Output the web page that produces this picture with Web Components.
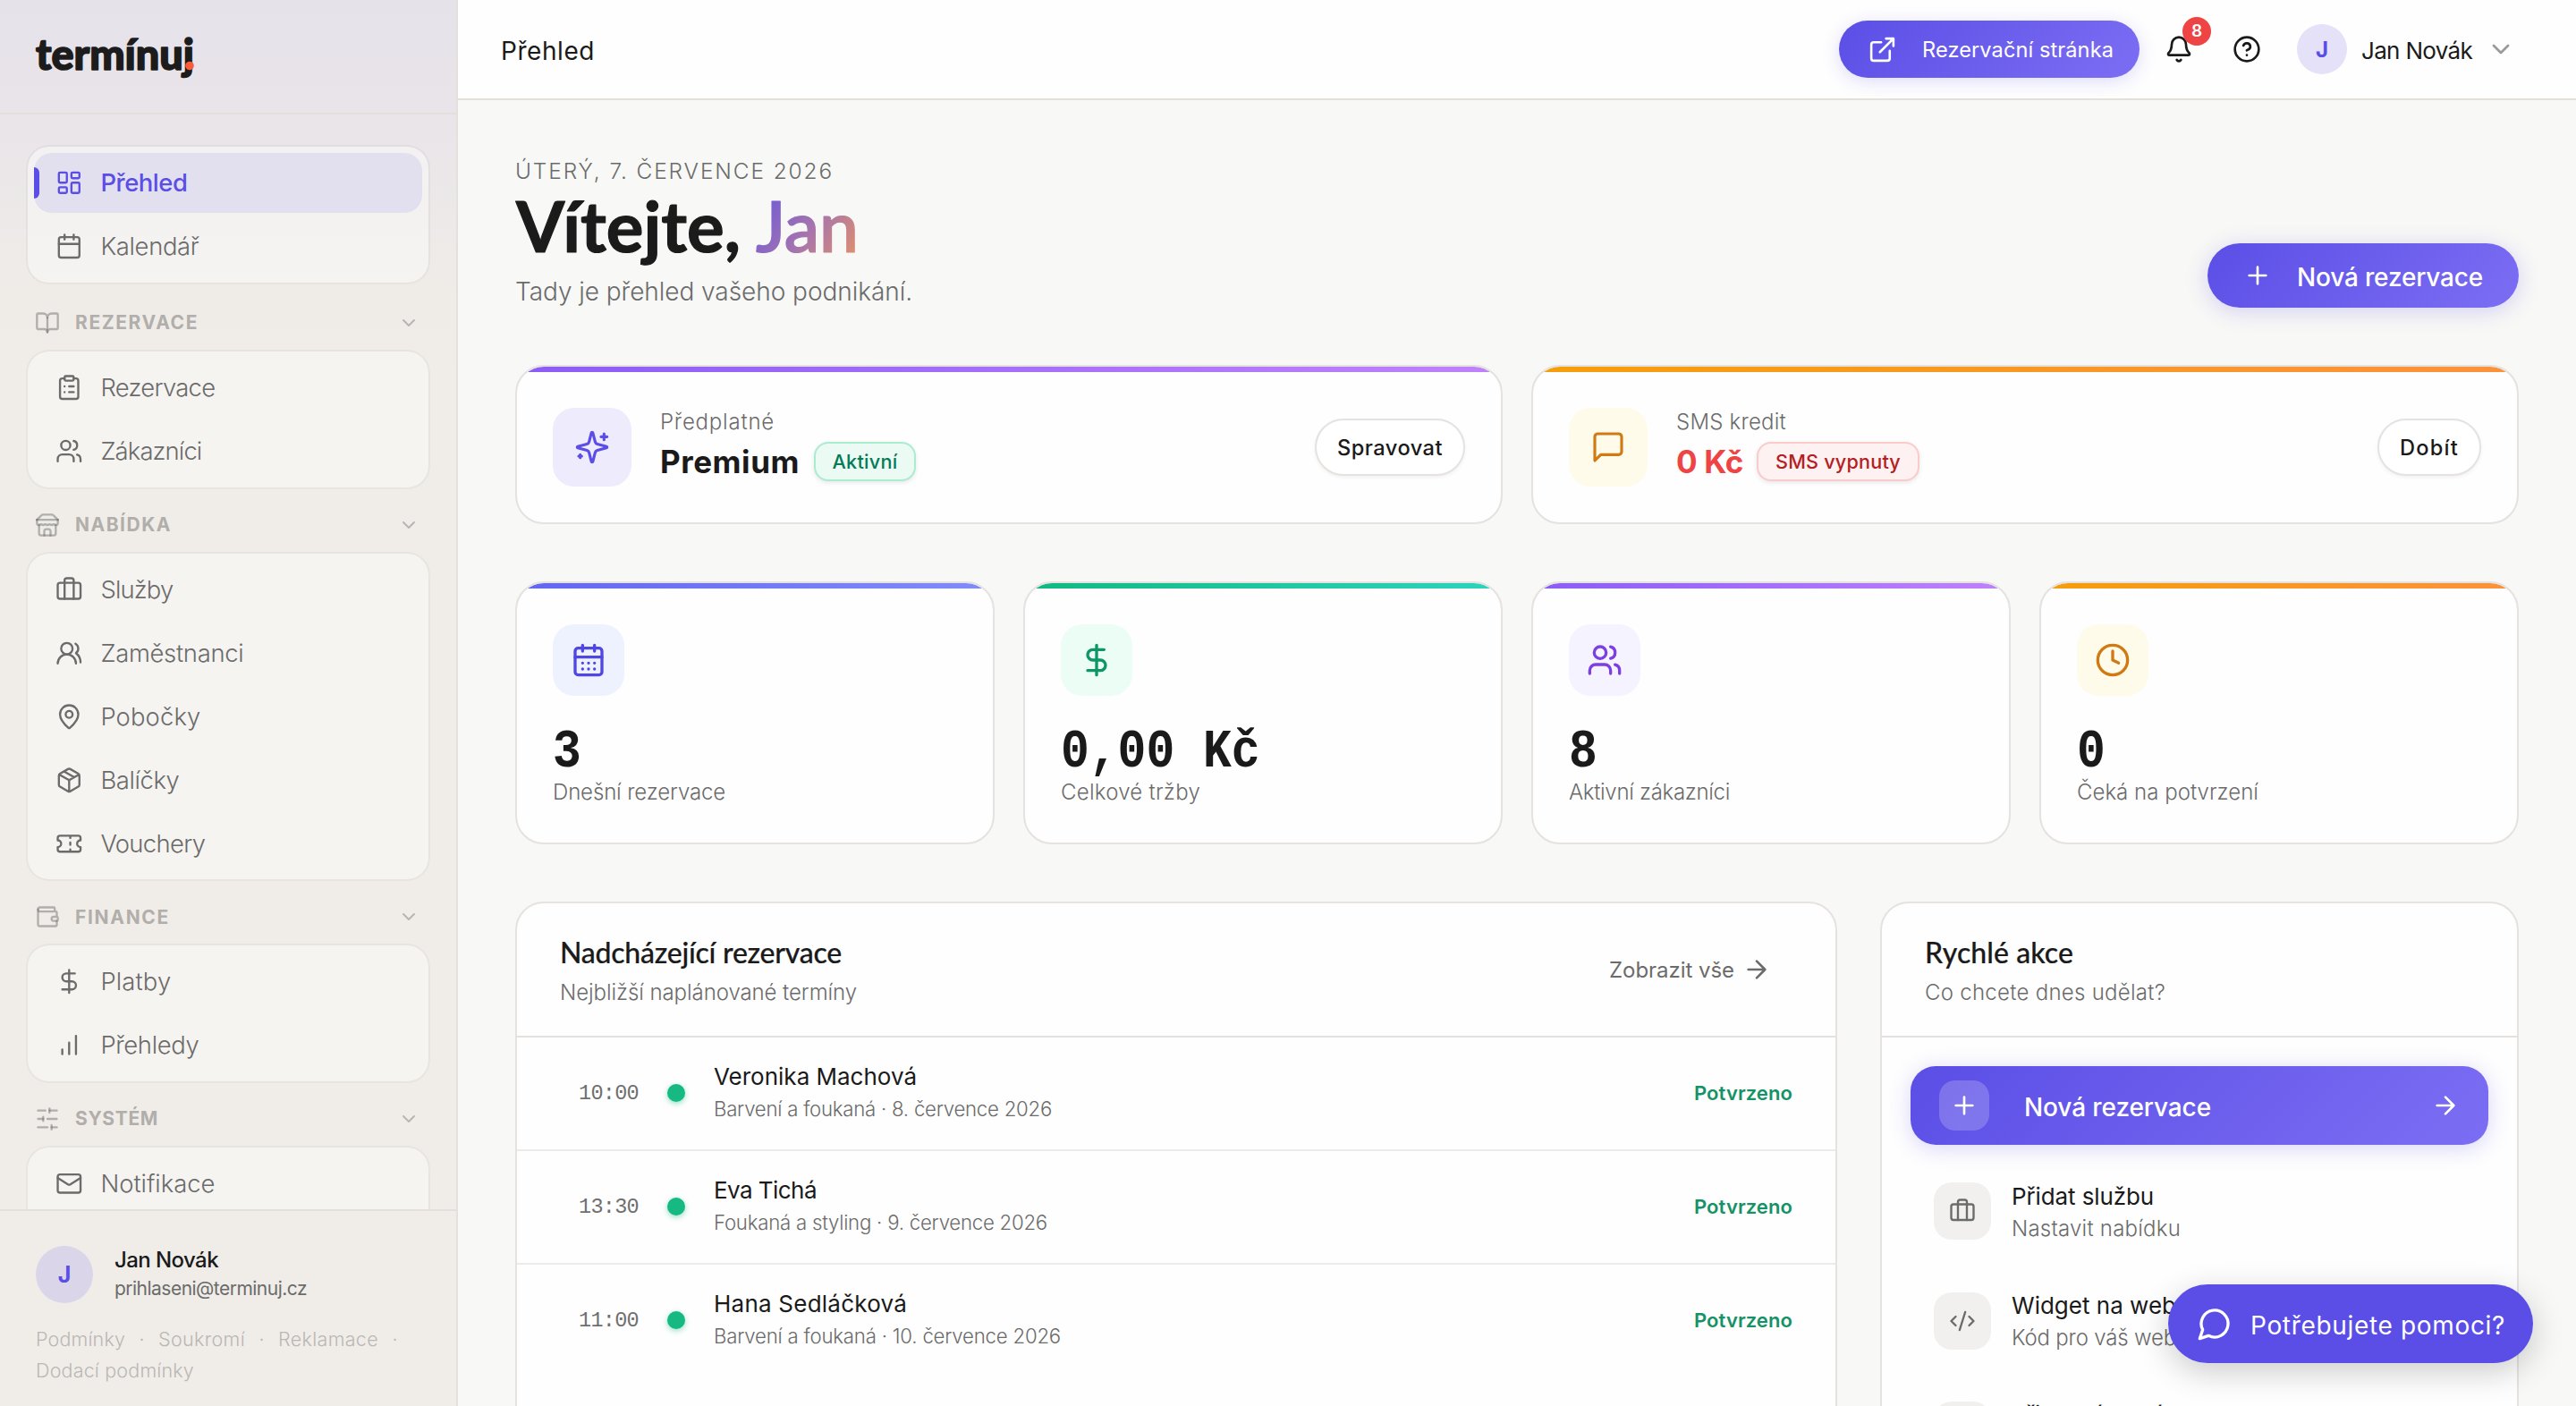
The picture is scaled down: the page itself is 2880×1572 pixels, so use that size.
<!DOCTYPE html>
<html lang="cs">
<head>
<meta charset="utf-8">
<title>Přehled – termínuj</title>
<style>
html,body{margin:0;padding:0;height:100%;overflow:hidden}
body{background:#f8f8f6;font-family:Inter,"Noto Sans",sans-serif;color:#1a1a1a}
</style>
</head>
<body>
<app-shell></app-shell>
<script>
const define = (name, render, after) => customElements.define(name, class extends HTMLElement {
  constructor(){ super(); this.attachShadow({mode:'open'}); }
  connectedCallback(){
    if (this.ready) return;
    this.ready = true;
    this.shadowRoot.innerHTML = render(this);
    if (after) after(this);
  }
});
const at = (el, n, d='') => el.getAttribute(n) ?? d;

const ICONS = {
  dashboard:'<rect width="7" height="9" x="3" y="3" rx="1"/><rect width="7" height="5" x="14" y="3" rx="1"/><rect width="7" height="9" x="14" y="12" rx="1"/><rect width="7" height="5" x="3" y="16" rx="1"/>',
  calendar:'<path d="M8 2v4M16 2v4"/><rect width="18" height="18" x="3" y="4" rx="2"/><path d="M3 10h18"/>',
  days:'<path d="M8 2v4M16 2v4"/><rect width="18" height="18" x="3" y="4" rx="2"/><path d="M3 10h18M8 14h.01M12 14h.01M16 14h.01M8 18h.01M12 18h.01M16 18h.01"/>',
  book:'<path d="M12 7v14"/><path d="M3 18a1 1 0 0 1-1-1V4a1 1 0 0 1 1-1h5a4 4 0 0 1 4 4 4 4 0 0 1 4-4h5a1 1 0 0 1 1 1v13a1 1 0 0 1-1 1h-6a3 3 0 0 0-3 3 3 3 0 0 0-3-3z"/>',
  clipboard:'<rect width="8" height="4" x="8" y="2" rx="1"/><path d="M16 4h2a2 2 0 0 1 2 2v14a2 2 0 0 1-2 2H6a2 2 0 0 1-2-2V6a2 2 0 0 1 2-2h2M12 11h4M12 16h4M8 11h.01M8 16h.01"/>',
  users:'<path d="M16 21v-2a4 4 0 0 0-4-4H6a4 4 0 0 0-4 4v2"/><circle cx="9" cy="7" r="4"/><path d="M22 21v-2a4 4 0 0 0-3-3.87M16 3.13a4 4 0 0 1 0 7.75"/>',
  round:'<path d="M18 21a8 8 0 0 0-16 0"/><circle cx="10" cy="8" r="5"/><path d="M22 20c0-3.37-2-6.5-4-8a5 5 0 0 0-.45-8.3"/>',
  store:'<path d="m2 7 4.41-4.41A2 2 0 0 1 7.83 2h8.34a2 2 0 0 1 1.42.59L22 7"/><path d="M4 12v8a2 2 0 0 0 2 2h12a2 2 0 0 0 2-2v-8"/><path d="M15 22v-4a2 2 0 0 0-2-2h-2a2 2 0 0 0-2 2v4"/><path d="M2 7h20"/><path d="M22 7v3a2 2 0 0 1-2 2a2.7 2.7 0 0 1-1.59-.63.7.7 0 0 0-.82 0A2.7 2.7 0 0 1 16 12a2.7 2.7 0 0 1-1.59-.63.7.7 0 0 0-.82 0A2.7 2.7 0 0 1 12 12a2.7 2.7 0 0 1-1.59-.63.7.7 0 0 0-.82 0A2.7 2.7 0 0 1 8 12a2.7 2.7 0 0 1-1.59-.63.7.7 0 0 0-.82 0A2.7 2.7 0 0 1 4 12a2 2 0 0 1-2-2V7"/>',
  case:'<path d="M16 20V4a2 2 0 0 0-2-2h-4a2 2 0 0 0-2 2v16"/><rect width="20" height="14" x="2" y="6" rx="2"/>',
  pin:'<path d="M20 10c0 4.993-5.539 10.193-7.399 11.799a1 1 0 0 1-1.202 0C9.539 20.193 4 14.993 4 10a8 8 0 0 1 16 0"/><circle cx="12" cy="10" r="3"/>',
  box:'<path d="M11 21.73a2 2 0 0 0 2 0l7-4A2 2 0 0 0 21 16V8a2 2 0 0 0-1-1.73l-7-4a2 2 0 0 0-2 0l-7 4A2 2 0 0 0 3 8v8a2 2 0 0 0 1 1.73zM12 22V12M3.29 7 12 12l8.71-5M7.5 4.27l9 5.15"/>',
  ticket:'<path d="M2 9a3 3 0 0 1 0 6v2a2 2 0 0 0 2 2h16a2 2 0 0 0 2-2v-2a3 3 0 0 1 0-6V7a2 2 0 0 0-2-2H4a2 2 0 0 0-2 2ZM13 5v2M13 17v2M13 11v2"/>',
  wallet:'<path d="M19 7V4a1 1 0 0 0-1-1H5a2 2 0 0 0 0 4h15a1 1 0 0 1 1 1v4h-3a2 2 0 0 0 0 4h3a1 1 0 0 0 1-1v-2a1 1 0 0 0-1-1"/><path d="M3 5v14a2 2 0 0 0 2 2h15a1 1 0 0 0 1-1v-4"/>',
  dollar:'<path d="M12 2v20M17 5H9.5a3.5 3.5 0 0 0 0 7h5a3.5 3.5 0 0 1 0 7H6"/>',
  bars:'<path d="M12 20V10M18 20V4M6 20v-4"/>',
  sliders:'<path d="M21 4h-7"/><path d="M10 4H3"/><path d="M21 12h-9"/><path d="M8 12H3"/><path d="M21 20h-5"/><path d="M12 20H3"/><path d="M14 2v4"/><path d="M8 10v4"/><path d="M16 18v4"/>',
  mail:'<rect width="20" height="16" x="2" y="4" rx="2"/><path d="m22 7-8.97 5.7a1.94 1.94 0 0 1-2.06 0L2 7"/>',
  down:'<path d="m6 9 6 6 6-6"/>',
  external:'<path d="M15 3h6v6M10 14 21 3M18 13v6a2 2 0 0 1-2 2H5a2 2 0 0 1-2-2V8a2 2 0 0 1 2-2h6"/>',
  bell:'<path d="M10.268 21a2 2 0 0 0 3.464 0M3.262 15.326A1 1 0 0 0 4 17h16a1 1 0 0 0 .74-1.673C19.41 13.956 18 12.499 18 8A6 6 0 0 0 6 8c0 4.499-1.411 5.956-2.738 7.326"/>',
  help:'<circle cx="12" cy="12" r="10"/><path d="M9.09 9a3 3 0 0 1 5.83 1c0 2-3 3-3 3M12 17h.01"/>',
  plus:'<path d="M5 12h14M12 5v14"/>',
  sparkles:'<path d="M9.937 15.5A2 2 0 0 0 8.5 14.063l-6.135-1.582a.5.5 0 0 1 0-.962L8.5 9.936A2 2 0 0 0 9.937 8.5l1.582-6.135a.5.5 0 0 1 .963 0L14.063 8.5A2 2 0 0 0 15.5 9.937l6.135 1.581a.5.5 0 0 1 0 .964L15.5 14.063a2 2 0 0 0-1.437 1.437l-1.582 6.135a.5.5 0 0 1-.963 0zM20 3v4M22 5h-4M4 17v2M5 18H3"/>',
  message:'<path d="M21 15a2 2 0 0 1-2 2H7l-4 4V5a2 2 0 0 1 2-2h14a2 2 0 0 1 2 2z"/>',
  clock:'<circle cx="12" cy="12" r="10"/><path d="M12 6v6l4 2"/>',
  arrow:'<path d="M5 12h14M12 5l7 7-7 7"/>',
  code:'<path d="m18 16 4-4-4-4M6 8l-4 4 4 4M14.5 4l-5 16"/>',
  chat:'<path d="M7.9 20A9 9 0 1 0 4 16.1L2 22Z"/>',
  userplus:'<path d="M16 21v-2a4 4 0 0 0-4-4H6a4 4 0 0 0-4 4v2"/><circle cx="9" cy="7" r="4"/><path d="M19 8v6M22 11h-6"/>'
};

define('x-icon', el => `<style>:host{display:block;flex:none;width:${at(el,'size',32)}px;height:${at(el,'size',32)}px}svg{display:block;width:100%;height:100%}</style>
<svg viewBox="0 0 24 24" fill="none" stroke="currentColor" stroke-width="${at(el,'sw',2)}" stroke-linecap="round" stroke-linejoin="round">${ICONS[at(el,'name')]}</svg>`);

define('round-avatar', el => `<style>:host{display:flex;flex:none;align-items:center;justify-content:center;border-radius:50%;color:#5b4ee6;font-weight:650}</style><slot></slot>`);

define('nav-item', el => `<style>
:host{display:flex;align-items:center;height:67px;padding-left:24px;gap:20px;border-radius:20px;position:relative;font-size:27.4px;font-weight:350;color:#6b6b6b}
:host([active]){background:#e2e0ef;color:#5b4ee6;font-weight:550}
:host([active])::before{content:"";position:absolute;left:0;top:16px;width:6px;height:35px;border-radius:0 6px 6px 0;background:#5b4ee6}
</style><x-icon name="${at(el,'icon')}" size="30.6" sw="1.85"></x-icon><fit-text w="${at(el,'w')}">${at(el,'label')}</fit-text>`);

define('nav-card', el => `<style>:host{display:flex;flex-direction:column;gap:4px;padding:6.8px;border:2px solid rgba(60,50,40,.045);border-radius:26px;background:rgba(252,252,250,.5);background-clip:padding-box}</style><slot></slot>`);

define('nav-title', el => `<style>
:host{display:flex;align-items:center;height:60px;padding:10px 12px 0 10px;color:#b1aeab;font-size:21px;font-weight:700}
:host([first]){padding-top:13.4px}
fit-text{margin-left:17px;flex:none}
.i{color:rgba(107,107,107,.48)} .c{margin-left:auto;color:#b8b5b2}
</style><x-icon class="i" name="${at(el,'icon')}" size="28"></x-icon><fit-text w="${at(el,'w')}">${at(el,'label')}</fit-text><x-icon class="c" name="down" size="24"></x-icon>`);

define('brand-logo', el => `<style>:host{display:block;width:200px;height:70px}svg{display:block;overflow:visible}</style>
<svg width="200" height="70" viewBox="0 0 200 70"><text x="2" y="47.5" textLength="177" lengthAdjust="spacingAndGlyphs" font-family="Lato" font-weight="900" font-size="47" fill="#1c1c1c" stroke="#1c1c1c" stroke-width="1.6" stroke-linejoin="round">termínuj</text><circle cx="174" cy="43.5" r="4.8" fill="#fb5b3c"/></svg>`);

define('app-sidebar', el => `<style>
:host{display:flex;flex-direction:column;width:510px;flex:none;border-right:2px solid #e4e0de;background:linear-gradient(180deg,#e6e2ea 0,#e8e4e9 120px,#efece8 320px,#f0ede8 420px,#f0ede9 100%)}
header{border-bottom:2px solid #e3dfdb;padding:30px 0 0 38px;box-sizing:content-box;height:96px}
nav{flex:1;min-height:0;overflow:hidden;padding:34px 29px 0}
footer{height:218px;border-top:2px solid #e2dfdc}
.me{display:flex;align-items:center;padding:39px 0 0 40px;gap:24px}
round-avatar{width:64px;height:64px;background:#dad5e9;font-size:25px}
.n{display:flex;flex-direction:column}
.n fit-text{line-height:32px}
.a{font-weight:550;font-size:24px}.b{font-size:21px;color:#6b6b6b}
.l{display:flex;flex-wrap:wrap;align-items:center;font-size:21.5px;line-height:34.5px;color:#bab7b4;padding:23px 0 0 40px;font-weight:350}
.l i{font-style:normal;width:37px;text-align:center}
</style>
<header><brand-logo></brand-logo></header>
<nav>
<nav-card><nav-item active icon="dashboard" label="Přehled" w="97"></nav-item><nav-item icon="calendar" label="Kalendář" w="110"></nav-item></nav-card>
<nav-title first icon="book" label="REZERVACE" w="138"></nav-title>
<nav-card><nav-item icon="clipboard" label="Rezervace" w="128"></nav-item><nav-item icon="users" label="Zákazníci" w="113"></nav-item></nav-card>
<nav-title icon="store" label="NABÍDKA" w="108"></nav-title>
<nav-card><nav-item icon="case" label="Služby" w="81"></nav-item><nav-item icon="round" label="Zaměstnanci" w="160"></nav-item><nav-item icon="pin" label="Pobočky" w="112"></nav-item><nav-item icon="box" label="Balíčky" w="88"></nav-item><nav-item icon="ticket" label="Vouchery" w="117"></nav-item></nav-card>
<nav-title icon="wallet" label="FINANCE" w="106"></nav-title>
<nav-card><nav-item icon="dollar" label="Platby" w="79"></nav-item><nav-item icon="bars" label="Přehledy" w="110"></nav-item></nav-card>
<nav-title icon="sliders" label="SYSTÉM" w="93"></nav-title>
<nav-card><nav-item icon="mail" label="Notifikace" w="128"></nav-item><nav-item icon="sliders" label=""></nav-item></nav-card>
</nav>
<footer><div class="me"><round-avatar>J</round-avatar><div class="n"><fit-text class="a" w="116">Jan Novák</fit-text><fit-text class="b" w="215">prihlaseni@terminuj.cz</fit-text></div></div>
<div class="l"><fit-text w="100">Podmínky</fit-text><i>·</i><fit-text w="97">Soukromí</fit-text><i>·</i><fit-text w="112">Reklamace</fit-text><i>·</i><fit-text w="177">Dodací podmínky</fit-text></div></footer>`);

define('pill-button', el => `<style>
:host{display:flex;align-items:center;box-sizing:border-box;border-radius:40px;color:#fff;background:linear-gradient(135deg,#5b4ee6,#7c6ef3);box-shadow:0 4px 24px rgba(91,78,230,.24)}
</style><slot></slot>`);

define('outline-button', el => `<style>
:host{display:flex;flex:none;align-items:center;justify-content:center;box-sizing:border-box;height:64px;border:2px solid #e5e2df;border-radius:32px;background:#fff;box-shadow:0 2px 4px rgba(0,0,0,.05);font-size:23.6px;font-weight:450}
</style><slot></slot>`);

define('status-badge', el => `<style>
:host{display:flex;align-items:center;justify-content:center;box-sizing:border-box;height:44px;border:2px solid #a9eccf;border-radius:16px;background:#ebfbf4;color:#067a57;box-shadow:0 2px 5px rgba(0,0,0,.09);font-size:21.6px;font-weight:450}
:host([tone=red]){border-color:#fbcaca;background:#fdf1f1;color:#b4201f}
</style><slot></slot>`);

define('top-bar', el => `<style>
:host{display:flex;align-items:center;height:110px;border-bottom:2px solid #e3dfdb;background:#fefefe;padding:0 68px 0 48px;flex:none}
.t{font-size:28px;line-height:40px;font-weight:430;padding-top:3px}
pill-button{margin-left:auto;width:336px;height:64px;padding-left:32px;gap:28px;font-size:23.6px;font-weight:420;box-shadow:0 4px 20px rgba(91,78,230,.2)}
.bell{position:relative;margin-left:28px}
.bell span{position:absolute;left:20px;top:-20px;width:32px;height:32px;border-radius:50%;background:#ee4444;color:#fff;font-size:19px;line-height:32px;font-weight:600;text-align:center}
.help{margin-left:44px}
round-avatar{width:56px;height:56px;margin-left:40px;background:#e4e1f8;font-size:24px}
.u{margin-left:16px;font-size:26px;font-weight:430;padding-top:2px}
.d{margin-left:16px;color:#9c9a98}
</style>
<fit-text class="t" w="105">Přehled</fit-text>
<pill-button><x-icon name="external" size="33" sw="1.9"></x-icon><fit-text w="214">Rezervační stránka</fit-text></pill-button>
<div class="bell"><x-icon name="bell"></x-icon><span>8</span></div>
<x-icon class="help" name="help"></x-icon>
<round-avatar>J</round-avatar><fit-text class="u" w="124">Jan Novák</fit-text><x-icon class="d" name="down"></x-icon>`);

define('welcome-title', el => `<style>:host{display:block;height:80px}svg{display:block;overflow:visible}</style>
<svg width="400" height="80" viewBox="0 0 400 80" font-family="Lato" font-weight="700" font-size="78" stroke-width="1.2" stroke-linejoin="round">
<defs><linearGradient id="g" gradientUnits="userSpaceOnUse" x1="268" y1="0" x2="378" y2="76"><stop offset="0" stop-color="#6757dc"/><stop offset=".5" stop-color="#a172b2"/><stop offset="1" stop-color="#e0906c"/></linearGradient></defs>
<text x="1" y="64" textLength="251" lengthAdjust="spacingAndGlyphs" fill="#1b1b1b" stroke="#1b1b1b">Vítejte,</text>
<text x="269" y="64" textLength="115" lengthAdjust="spacingAndGlyphs" font-weight="600" fill="url(#g)" stroke="url(#g)">Jan</text></svg>`);

define('page-head', el => `<style>
:host{display:flex;justify-content:space-between;height:232px}
.d{font-size:24.4px;line-height:32px;color:#6b6b6b;font-weight:350;display:block}
.s{font-size:28px;line-height:40px;color:#6b6b6b;font-weight:330;display:block;margin-top:8px}
pill-button{width:348px;height:72px;margin-top:97px;padding-left:40px;gap:28px;font-size:28px;font-weight:550}
pill-button fit-text{padding-top:3px}
</style><div class="l"><fit-text class="d" w="356">ÚTERÝ, 7. ČERVENCE 2026</fit-text><welcome-title style="margin-top:11px"></welcome-title><fit-text class="s" w="444">Tady je přehled vašeho podnikání.</fit-text></div>
<pill-button><x-icon name="plus"></x-icon><fit-text w="208">Nová rezervace</fit-text></pill-button>`);

define('accent-card', el => `<style>
:host{display:block;box-sizing:border-box;border:2px solid #e5e2df;border-radius:32px;background:linear-gradient(90deg,var(--a),var(--b)) top/100% 6px no-repeat padding-box,#fefefe padding-box;overflow:hidden}
</style><slot></slot>`);

define('plan-card', el => `<style>
:host{display:block}
accent-card{height:178px;--a:${at(el,'a')};--b:${at(el,'b')}}
.r{display:flex;align-items:center;height:88px;padding:46px 40px 0 40px}
.i{display:flex;align-items:center;justify-content:center;width:88px;height:88px;border-radius:24px;background:${at(el,'bg')};color:${at(el,'fg')}}
.c{margin-left:32px;padding-bottom:6px}
.k{font-size:24px;line-height:32px;color:#6b6b6b;font-weight:350;display:block}
.v{display:flex;align-items:center;gap:${at(el,'gap')}px;margin-top:6px}
.v>fit-text{font-size:35px;line-height:44px;font-weight:650;color:${at(el,'vc')}}
outline-button{margin-left:auto;width:${at(el,'bw')}px}
</style><accent-card><div class="r"><div class="i"><x-icon name="${at(el,'icon')}" size="40" sw="1.9"></x-icon></div>
<div class="c"><fit-text class="k" w="${at(el,'lw')}">${at(el,'label')}</fit-text><div class="v"><fit-text w="${at(el,'vw')}">${at(el,'value')}</fit-text><status-badge tone="${at(el,'tone')}" style="width:${at(el,'sw')}px"><fit-text w="${at(el,'stw')}">${at(el,'status')}</fit-text></status-badge></div></div>
<outline-button><fit-text w="${at(el,'btw')}">${at(el,'btn')}</fit-text></outline-button></div></accent-card>`);

define('stat-card', el => `<style>
:host{display:block}
accent-card{height:294px;--a:${at(el,'a')};--b:${at(el,'b')}}
.b{padding:46px 40px 0}
.i{display:flex;align-items:center;justify-content:center;width:80px;height:80px;border-radius:24px;background:${at(el,'bg')};color:${at(el,'fg')}}
.v{font:700 62px/60px "Liberation Mono",monospace;height:60px;margin-top:33px;white-space:pre;transform:scaleX(.855);transform-origin:0 0}
.k{font-size:24px;line-height:32px;color:#6b6b6b;font-weight:350;display:block;margin-top:-1px}
</style><accent-card><div class="b"><div class="i"><x-icon name="${at(el,'icon')}" size="40"></x-icon></div><div class="v">${at(el,'value')}</div><fit-text class="k" w="${at(el,'lw')}">${at(el,'label')}</fit-text></div></accent-card>`);

define('panel-box', el => `<style>
:host{display:block;box-sizing:border-box;border:2px solid #e5e2df;border-radius:32px;background:#fefefe;height:800px}
header{display:flex;justify-content:space-between;height:148px;border-bottom:2px solid #e3e0dd;padding:0 48px}
.t{font:500 32px/40px Lato,sans-serif;color:#1a1a1a;-webkit-text-stroke:.2px #1a1a1a;display:block;margin-top:35px}
.s{font-size:24px;line-height:32px;color:#6b6b6b;font-weight:350;display:block;margin-top:9px}
</style><header><div><fit-text class="t" w="315">${at(el,'heading')}</fit-text><fit-text class="s" w="${at(el,'sw')}">${at(el,'sub')}</fit-text></div><slot name="action"></slot></header><slot></slot>`.replace('w="315"', `w="${at(el,'tw')}"`));

define('booking-row', el => `<style>
:host{display:flex;align-items:center;height:124.9px;border-bottom:2px solid #ecebe9;padding:0 48px 0 69px}
:host(:last-of-type){border-bottom:0}
.t{font-size:23.5px;font-family:"Liberation Mono",monospace;color:#6f6f6f}
.o{width:20px;height:20px;border-radius:50%;background:#15b981;box-shadow:0 2px 6px rgba(21,185,129,.45);margin:0 32px 0 32px}
.c{display:flex;flex-direction:column}
.n{font-size:26px;line-height:36px;font-weight:430}
.s{font-size:22.2px;line-height:36px;color:#6b6b6b;font-weight:350}
.p{margin-left:auto;font-size:22px;font-weight:600;color:#159266}
</style><fit-text class="t" w="67">${at(el,'time')}</fit-text><div class="o"></div><div class="c"><fit-text class="n" w="${at(el,'nw')}">${at(el,'name')}</fit-text><fit-text class="s" w="${at(el,'sw')}">${at(el,'sub')}</fit-text></div><fit-text class="p" w="110">Potvrzeno</fit-text>`);

define('quick-item', el => `<style>
:host{display:flex;align-items:center;height:122.4px}
.i{display:flex;align-items:center;justify-content:center;width:64px;height:64px;border-radius:20px;background:#f1f0ee;color:#6b6b6b;flex:none}
.c{display:flex;flex-direction:column;margin-left:23px;padding-top:3px}
.n{font-size:26px;line-height:36px;font-weight:430}
.s{font-size:24px;line-height:36px;height:36px;color:#6b6b6b;font-weight:350}
</style><div class="i"><x-icon name="${at(el,'icon')}" size="30" sw="1.9"></x-icon></div><div class="c"><fit-text class="n" w="${at(el,'nw')}">${at(el,'name')}</fit-text><fit-text class="s" w="${at(el,'sw')}">${at(el,'sub')}</fit-text></div>`);

define('chat-pill', el => `<style>
:host{position:absolute;right:48px;bottom:48px;display:flex;align-items:center;box-sizing:border-box;width:408px;height:88px;padding-left:32px;gap:20px;border-radius:44px;background:#5b4ee6;color:#fff;box-shadow:0 10px 36px rgba(0,0,0,.2);font-size:28px;font-weight:430}
fit-text{padding-top:3px}
</style><x-icon name="chat" size="40"></x-icon><fit-text w="285">Potřebujete pomoci?</fit-text>`);

define('app-shell', el => `<style>
:host{display:flex;position:relative;width:2880px;height:1572px;overflow:hidden}
main{flex:1;min-width:0;display:flex;flex-direction:column}
.body{padding:63px 64px 0;flex:1}
.g{display:grid;gap:32px}
.two{grid-template-columns:1fr 1fr;margin-top:1px}
.four{grid-template-columns:repeat(4,1fr);margin-top:64px}
.panels{grid-template-columns:1478px 714px;gap:48px;margin-top:64px}
.all{display:flex;align-items:center;gap:9px;height:148px;padding-right:24px;color:#6b6b6b;font-size:24px;font-weight:420}
.q{padding:32px}
.big{height:88px;border-radius:28px;padding:0 32px;font-size:28px;font-weight:550}
.sq{display:flex;align-items:center;justify-content:center;width:56px;height:56px;border-radius:18px;background:rgba(255,255,255,.2)}
.big fit-text{margin-left:39px;padding-top:3px}
.items{padding:13px 26px}
</style>
<app-sidebar></app-sidebar>
<main><top-bar></top-bar><div class="body">
<page-head></page-head>
<div class="g two">
<plan-card icon="sparkles" a="#8b5cf6" b="#bf82fb" bg="#edebfc" fg="#5b4ee6" label="Předplatné" lw="128" value="Premium" vw="156" vc="#1a1a1a" gap="16" status="Aktivní" sw="114" stw="73" btn="Spravovat" bw="168" btw="118"></plan-card>
<plan-card icon="message" a="#f59e0b" b="#fb923c" bg="#fffbeb" fg="#d17a14" label="SMS kredit" lw="123" value="0 Kč" vw="75" vc="#ee4444" gap="15" tone="red" status="SMS vypnuty" sw="182" stw="140" btn="Dobít" bw="116" btw="66"></plan-card>
</div>
<div class="g four">
<stat-card icon="days" a="#6366f1" b="#818cf8" bg="#eef2ff" fg="#4f46e5" value="3" label="Dnešní rezervace" lw="193"></stat-card>
<stat-card icon="dollar" a="#10b981" b="#2dd4bf" bg="#ecfdf5" fg="#0f9668" value="0,00 Kč" label="Celkové tržby" lw="156"></stat-card>
<stat-card icon="users" a="#8b5cf6" b="#bf82fb" bg="#f5f3ff" fg="#7c3fe0" value="8" label="Aktivní zákazníci" lw="180"></stat-card>
<stat-card icon="clock" a="#f59e0b" b="#fb923c" bg="#fffbeb" fg="#d17a14" value="0" label="Čeká na potvrzení" lw="203"></stat-card>
</div>
<div class="g panels">
<panel-box heading="Nadcházející rezervace" tw="315" sub="Nejbližší naplánované termíny" sw="332">
<div class="all" slot="action"><fit-text w="140">Zobrazit vše</fit-text><x-icon name="arrow"></x-icon></div>
<booking-row time="10:00" name="Veronika Machová" nw="227" sub="Barvení a foukaná · 8. července 2026" sw="378"></booking-row>
<booking-row time="13:30" name="Eva Tichá" nw="115" sub="Foukaná a styling · 9. července 2026" sw="373"></booking-row>
<booking-row time="11:00" name="Hana Sedláčková" nw="216" sub="Barvení a foukaná · 10. července 2026" sw="388"></booking-row>
</panel-box>
<panel-box heading="Rychlé akce" tw="166" sub="Co chcete dnes udělat?" sw="269">
<div class="q"><pill-button class="big"><div class="sq"><x-icon name="plus"></x-icon></div><fit-text w="209">Nová rezervace</fit-text><x-icon name="arrow" style="margin-left:auto"></x-icon></pill-button>
<div class="items">
<quick-item icon="case" name="Přidat službu" nw="159" sub="Nastavit nabídku" sw="189"></quick-item>
<quick-item icon="code" name="Widget na web" nw="184" sub="Kód pro váš web" sw="184"></quick-item>
<quick-item icon="userplus" name="Přidat zákazníka" nw="195" sub="" sw="150"></quick-item>
</div></div>
</panel-box>
</div>
</div></main>
<chat-pill></chat-pill>`);

/* Single-line text that spreads its letters to fill the width given in "w". */
define('fit-text', el => `<style>:host{display:block;flex:none;white-space:nowrap;width:${at(el,'w','0')}px}span{display:inline-block}</style><span><slot></slot></span>`, el => {
  const span = el.shadowRoot.querySelector('span');
  const n = el.textContent.length;
  if (!n) return;
  span.style.letterSpacing = (+at(el,'w') - span.getBoundingClientRect().width) / n + 'px';
});
</script>
</body>
</html>
